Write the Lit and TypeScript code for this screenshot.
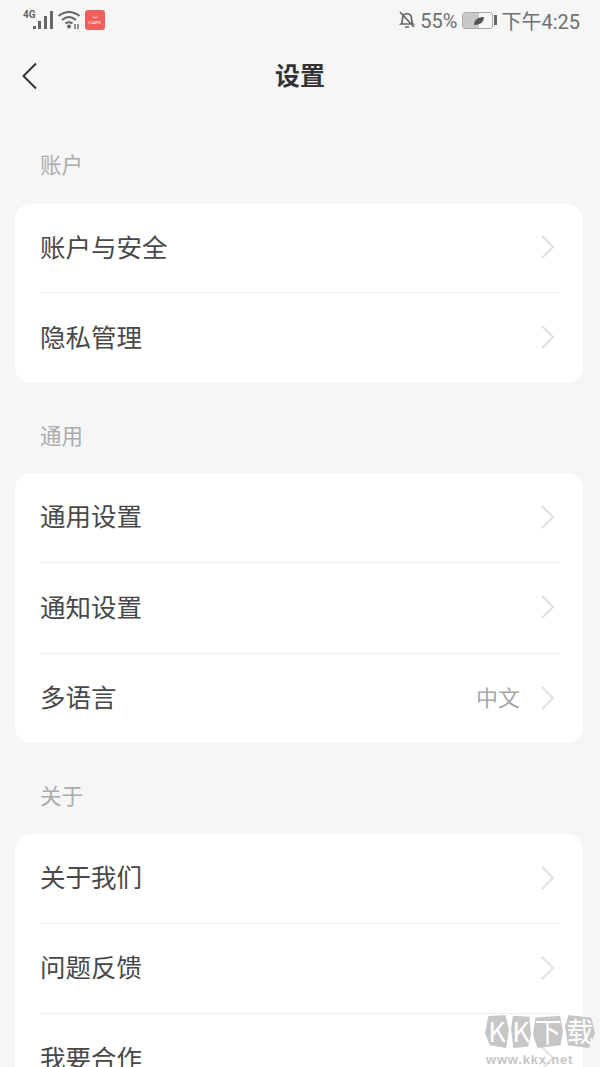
import { css, html, LitElement, svg } from "lit";
import { customElement, property } from "lit/decorators.js";

const chevron = svg`<svg class="chev" width="16" height="26" viewBox="0 0 16 26"><path d="M2 2 L13 13 L2 24" fill="none" stroke="#e0e0e0" stroke-width="2"/></svg>`;

@customElement("setting-row")
export class SettingRow extends LitElement {
  @property({ type: String }) label = "";
  @property({ type: String }) value = "";
  @property({ type: Number }) size = 90;
  @property({ type: Boolean }) last = false;

  render() {
    return html`
      <div class="row ${this.last ? "last" : ""}" style="height: ${this.size}px">
        <span class="label">${this.label}</span>
        ${this.value ? html`<span class="value">${this.value}</span>` : ""}
        ${chevron}
      </div>
    `;
  }

  static styles = css`
    :host {
      display: block;
    }
    .row {
      display: flex;
      align-items: center;
      box-sizing: border-box;
      margin: 0 23px 0 25px;
      padding-right: 4px;
      border-bottom: 1px solid #ececec;
      font-family: "Noto Sans CJK SC", sans-serif;
    }
    .row.last {
      border-bottom: 0;
    }
    .label {
      flex: 1;
      padding-bottom: 6px;
      font-size: 25.5px;
      color: #484848;
    }
    .value {
      padding-bottom: 6px;
      font-size: 22px;
      color: #a6a6a6;
      margin-right: 20px;
    }
    .chev {
      display: block;
      margin-top: -2px;
    }
  `;
}

@customElement("app-root")
export class AppRoot extends LitElement {
  private statusBar() {
    return html`
      <div class="status">
        <div class="status-left">
          <span class="net">4G</span>
          <svg width="20" height="20" viewBox="0 0 20 20">
            <g fill="#666">
              <rect x="0" y="16" width="3" height="3" />
              <rect x="5" y="11" width="3" height="8" />
              <rect x="11" y="6" width="3" height="13" />
              <rect x="17" y="1" width="3" height="18" />
            </g>
          </svg>
          <svg class="wifi" width="22" height="20" viewBox="0 0 22 20">
            <g fill="none" stroke="#666" stroke-width="2">
              <path d="M0.5 6 Q11 -2 21.5 6" />
              <path d="M4 10 Q11 4 18 10" />
              <path d="M7.5 13.5 Q11 11 14.5 13.5" />
            </g>
            <circle cx="11" cy="16.5" r="2" fill="#666" />
            <path d="M17 14 v5 M20 14 v5" stroke="#666" stroke-width="1.4" />
          </svg>
          <div class="app-badge"><span class="smile"></span><span class="mini">I-SAPO</span></div>
        </div>
        <div class="status-right">
          <svg width="18" height="20" viewBox="0 0 18 20">
            <path d="M3 14 C5 12 4 9 5 6 C6 3 12 3 13 6 C14 9 13 12 15 14 Z M7 17 h4 M2 2 L16 17" fill="none" stroke="#666" stroke-width="1.7" />
          </svg>
          <span class="pct">55%</span>
          <div class="battery">
            <div class="cell"><div class="fill"></div>
              <svg class="leaf" width="12" height="10" viewBox="0 0 12 10"><path d="M1 9 C1 3 6 1 11 1 C11 6 7 9 1 9 Z" fill="#555" /></svg>
            </div>
            <div class="cap"></div>
          </div>
          <span class="time">下午4:25</span>
        </div>
      </div>
    `;
  }

  render() {
    return html`
      ${this.statusBar()}
      <div class="nav">
        <svg class="back" width="18" height="28" viewBox="0 0 18 28">
          <path d="M15 1.5 L2.5 14 L15 26.5" fill="none" stroke="#333" stroke-width="2" />
        </svg>
        <span class="title">设置</span>
      </div>

      <div class="section first">账户</div>
      <div class="card">
        <setting-row label="账户与安全" size="89"></setting-row>
        <setting-row label="隐私管理" last></setting-row>
      </div>

      <div class="section">通用</div>
      <div class="card">
        <setting-row label="通用设置"></setting-row>
        <setting-row label="通知设置" size="91"></setting-row>
        <setting-row label="多语言" value="中文" size="89" last></setting-row>
      </div>

      <div class="section third">关于</div>
      <div class="card">
        <setting-row label="关于我们"></setting-row>
        <setting-row label="问题反馈"></setting-row>
        <setting-row label="我要合作" last></setting-row>
      </div>

      <svg class="ghost" width="70" height="50" viewBox="0 0 70 50">
        <path d="M4 34 L40 10 M22 46 L40 28 M40 44 L62 30 M30 6 L44 6" fill="none" stroke="#fff" stroke-width="2" opacity="0.3" />
      </svg>

      <div class="watermark">
        <div class="wm-title">
          <span class="b1">K</span><span class="b2">K</span><span class="b3">下</span><span class="b4">载</span>
        </div>
        <div class="wm-url">www.kkx.net</div>
      </div>
    `;
  }

  static styles = css`
    :host {
      display: block;
      position: relative;
      height: 1067px;
      overflow: hidden;
      background: #f6f6f6;
      font-family: "Noto Sans CJK SC", sans-serif;
    }
    .status {
      display: flex;
      justify-content: space-between;
      align-items: center;
      height: 40px;
      padding: 0 20px 0 23px;
      color: #666;
    }
    .status-left,
    .status-right {
      display: flex;
      align-items: center;
    }
    .net {
      font-family: "Roboto", sans-serif;
      font-size: 10px;
      font-weight: 700;
      margin: -12px -3px 0 0;
    }
    .wifi {
      margin-left: 5px;
    }
    .app-badge {
      width: 20px;
      height: 20px;
      margin-left: 5px;
      border-radius: 3px;
      background: #ef5f5b;
      display: flex;
      flex-direction: column;
      align-items: center;
      overflow: hidden;
    }
    .smile {
      width: 6px;
      height: 3px;
      margin-top: 4px;
      border-bottom: 1px solid #ffd9d5;
      border-radius: 0 0 4px 4px;
    }
    .mini {
      font-family: "Roboto", sans-serif;
      font-size: 4px;
      line-height: 6px;
      color: #fff;
      white-space: nowrap;
      margin-top: 2px;
    }
    .pct {
      font-family: "Roboto", sans-serif;
      font-size: 20px;
      margin: 2px 0 0 4px;
      color: #707070;
    }
    .battery {
      display: flex;
      align-items: center;
      margin-left: 5px;
    }
    .cell {
      position: relative;
      width: 29px;
      height: 15px;
      border: 1px solid #aaa;
      border-radius: 3px;
    }
    .fill {
      width: 55%;
      height: 100%;
      background: #c8c8c8;
      border-radius: 2px 0 0 2px;
    }
    .leaf {
      position: absolute;
      left: 10px;
      top: 3px;
    }
    .cap {
      width: 3px;
      height: 10px;
      margin-left: 1px;
      background: #666;
    }
    .time {
      font-family: "Roboto", "Noto Sans CJK SC", sans-serif;
      font-size: 20px;
      margin-left: 4px;
      color: #707070;
    }
    .nav {
      position: relative;
      display: flex;
      align-items: center;
      justify-content: center;
      height: 72px;
    }
    .back {
      position: absolute;
      left: 21px;
      top: 22px;
    }
    .title {
      padding-bottom: 4px;
      font-size: 25px;
      font-weight: 700;
      color: #333;
    }
    .section {
      height: 90px;
      box-sizing: border-box;
      padding: 36px 0 0 40px;
      font-size: 21.5px;
      line-height: 32px;
      color: #ababab;
    }
    .section.first {
      height: 92px;
    }
    .section.third {
      height: 91px;
    }
    .card {
      margin: 0 17px 0 15px;
      background: #fff;
      border-radius: 16px;
    }
    .ghost {
      position: absolute;
      left: 510px;
      top: 44px;
      pointer-events: none;
    }
    .watermark {
      position: absolute;
      left: 485px;
      top: 1015px;
      width: 112px;
      pointer-events: none;
    }
    .wm-title {
      display: flex;
      gap: 2px;
    }
    .wm-title span {
      height: 33px;
      background: #c6c6c6;
      color: #fff;
      font-size: 27px;
      line-height: 31px;
      text-align: center;
    }
    .wm-title .b1 {
      width: 24px;
      clip-path: polygon(14% 3%, 85% 0, 100% 45%, 88% 100%, 20% 92%, 0 55%);
    }
    .wm-title .b2 {
      width: 20px;
      clip-path: polygon(10% 2%, 92% 5%, 100% 60%, 85% 96%, 12% 100%, 0 40%);
    }
    .wm-title .b3 {
      width: 30px;
      clip-path: polygon(8% 8%, 90% 2%, 100% 50%, 92% 92%, 15% 100%, 0 60%);
    }
    .wm-title .b4 {
      width: 30px;
      clip-path: polygon(12% 0, 88% 8%, 100% 55%, 80% 100%, 10% 92%, 0 35%);
    }
    .wm-url {
      font-family: "Liberation Sans", sans-serif;
      font-size: 13px;
      font-weight: 700;
      letter-spacing: 0.8px;
      color: #c6c6c6;
      margin: 4px 0 0 1px;
    }
  `;
}
